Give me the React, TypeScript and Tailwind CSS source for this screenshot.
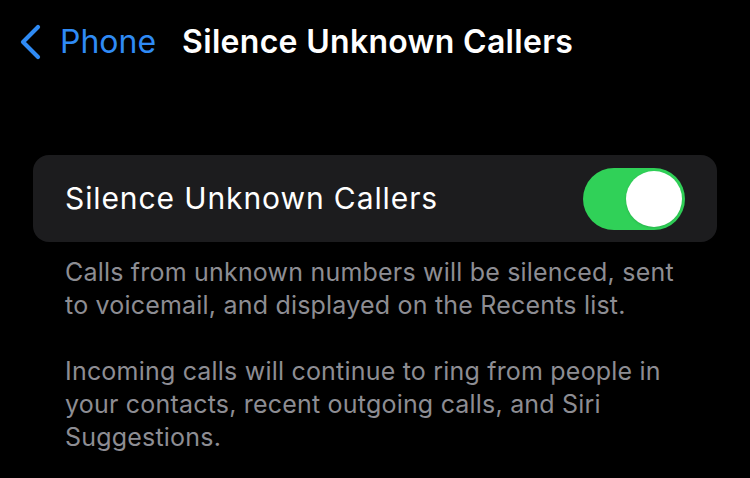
import { useState } from 'react'

function Toggle({ on, onChange }: { on: boolean; onChange: (v: boolean) => void }) {
  return (
    <button
      onClick={() => onChange(!on)}
      className={`flex h-[62px] w-[102px] items-center rounded-full p-[3px] ${on ? 'justify-end bg-[#30d158]' : 'justify-start bg-[#39393d]'}`}
    >
      <span className="h-[56px] w-[56px] rounded-full bg-white shadow" />
    </button>
  )
}

export default function App() {
  const [silence, setSilence] = useState(true)

  return (
    <div className="h-[478px] w-[750px] overflow-hidden bg-black font-['Inter',sans-serif] text-white">
      <div className="flex h-[84px] items-center pl-[18px]">
        <svg width="24" height="36" viewBox="0 0 24 36" className="mr-[18px]">
          <path d="M20 3 L5 18 L20 33" fill="none" stroke="#2f8bf5" strokeWidth="4.2" strokeLinecap="round" strokeLinejoin="round" />
        </svg>
        <span className="text-[32px] text-[#2f8bf5]">Phone</span>
        <span className="ml-[26px] text-[32px] font-semibold tracking-[0.3px]">Silence Unknown Callers</span>
      </div>

      <div className="mx-[33px] mt-[71px] flex h-[87px] items-center justify-between rounded-[16px] bg-[#1c1c1e] pl-[32px] pr-[32px]">
        <span className="text-[30px] tracking-[0.9px]">Silence Unknown Callers</span>
        <Toggle on={silence} onChange={setSilence} />
      </div>

      <div className="mt-[14px] px-[65px] text-[25px] leading-[33px] tracking-[0.2px] text-[#8d8d93]">
        <p>
          Calls from unknown numbers will be silenced, sent
          <br />
          to voicemail, and displayed on the Recents list.
        </p>
        <p className="mt-[33px]">
          Incoming calls will continue to ring from people in
          <br />
          your contacts, recent outgoing calls, and Siri
          <br />
          Suggestions.
        </p>
      </div>
    </div>
  )
}
